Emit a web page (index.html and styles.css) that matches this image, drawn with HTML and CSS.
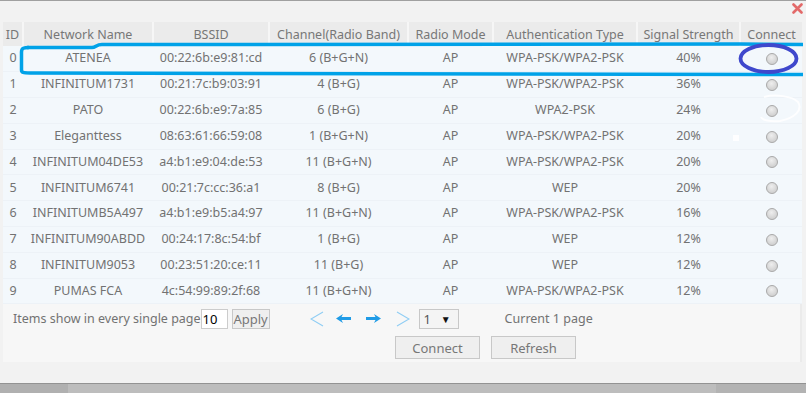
FILE: index.html
```html
<!DOCTYPE html>
<html>
<head>
<meta charset="utf-8">
<link rel="stylesheet" href="styles.css">
</head>
<body>
<div class="window">
  <div class="topbar">
    <svg class="close" width="11" height="11" viewBox="0 0 11 11"><path d="M1.5 1.5 L9.5 9.5 M9.5 1.5 L1.5 9.5" stroke="#e36a6a" stroke-width="2.6" stroke-linecap="round"/></svg>
  </div>
  <div class="panel">
    <table class="grid">
      <colgroup>
        <col style="width:20px"><col style="width:130px"><col style="width:116px"><col style="width:139px"><col style="width:85px"><col style="width:144px"><col style="width:103px"><col style="width:62px">
      </colgroup>
      <thead>
        <tr><th>ID</th><th>Network Name</th><th>BSSID</th><th>Channel(Radio Band)</th><th>Radio Mode</th><th>Authentication Type</th><th>Signal Strength</th><th>Connect</th></tr>
      </thead>
      <tbody>
        <tr><td>0</td><td>ATENEA</td><td>00:22:6b:e9:81:cd</td><td>6 (B+G+N)</td><td>AP</td><td>WPA-PSK/WPA2-PSK</td><td>40%</td><td><span class="radio"></span></td></tr>
        <tr><td>1</td><td>INFINITUM1731</td><td>00:21:7c:b9:03:91</td><td>4 (B+G)</td><td>AP</td><td>WPA-PSK/WPA2-PSK</td><td>36%</td><td><span class="radio"></span></td></tr>
        <tr><td>2</td><td>PATO</td><td>00:22:6b:e9:7a:85</td><td>6 (B+G)</td><td>AP</td><td>WPA2-PSK</td><td>24%</td><td><span class="radio"></span></td></tr>
        <tr><td>3</td><td>Eleganttess</td><td>08:63:61:66:59:08</td><td>1 (B+G+N)</td><td>AP</td><td>WPA-PSK/WPA2-PSK</td><td>20%</td><td><span class="radio"></span></td></tr>
        <tr><td>4</td><td>INFINITUM04DE53</td><td>a4:b1:e9:04:de:53</td><td>11 (B+G+N)</td><td>AP</td><td>WPA-PSK/WPA2-PSK</td><td>20%</td><td><span class="radio"></span></td></tr>
        <tr><td>5</td><td>INFINITUM6741</td><td>00:21:7c:cc:36:a1</td><td>8 (B+G)</td><td>AP</td><td>WEP</td><td>20%</td><td><span class="radio"></span></td></tr>
        <tr><td>6</td><td>INFINITUMB5A497</td><td>a4:b1:e9:b5:a4:97</td><td>11 (B+G+N)</td><td>AP</td><td>WPA-PSK/WPA2-PSK</td><td>16%</td><td><span class="radio"></span></td></tr>
        <tr><td>7</td><td>INFINITUM90ABDD</td><td>00:24:17:8c:54:bf</td><td>1 (B+G)</td><td>AP</td><td>WEP</td><td>12%</td><td><span class="radio"></span></td></tr>
        <tr><td>8</td><td>INFINITUM9053</td><td>00:23:51:20:ce:11</td><td>11 (B+G)</td><td>AP</td><td>WEP</td><td>12%</td><td><span class="radio"></span></td></tr>
        <tr><td>9</td><td>PUMAS FCA</td><td>4c:54:99:89:2f:68</td><td>11 (B+G+N)</td><td>AP</td><td>WPA-PSK/WPA2-PSK</td><td>12%</td><td><span class="radio"></span></td></tr>
      </tbody>
    </table>
    <div class="pager">
      <span class="label">Items show in every single page</span>
      <span class="field">10</span>
      <span class="btn apply">Apply</span>
      <svg class="chev first" width="14" height="16" viewBox="0 0 14 16"><polyline points="13,1 1,8 13,15" fill="none" stroke="#8fcdf4" stroke-width="1.1"/></svg>
      <svg class="arr prev" width="15" height="9" viewBox="0 0 15 9"><path d="M0 4.5 L7 0 L5.5 3 L15 3 L15 6 L5.5 6 L7 9 Z" fill="#1f9be6"/></svg>
      <svg class="arr next" width="16" height="9" viewBox="0 0 16 9"><path d="M16 4.5 L9 0 L10.5 3 L1 3 L1 6 L10.5 6 L9 9 Z" fill="#1f9be6"/></svg>
      <svg class="chev last" width="14" height="16" viewBox="0 0 14 16"><polyline points="1,1 13,8 1,15" fill="none" stroke="#8fcdf4" stroke-width="1.1"/></svg>
      <span class="select"><span>1</span><span class="caret">▼</span></span>
      <span class="current">Current 1 page</span>
    </div>
    <div class="actions">
      <span class="btn big">Connect</span>
      <span class="btn big">Refresh</span>
    </div>
  </div>
  <div class="filler"></div>
  <div class="scrollbar"><div class="sb-a"></div><div class="sb-b"></div><div class="sb-c"></div></div>
  <svg class="marks" width="806" height="393" viewBox="0 0 806 393">
    <path d="M29 47.5 C24 47.5 21.5 48 21.5 52 L21.5 70 C21.5 72.5 23 73 30 73 L803 74.5" fill="none" stroke="#00a2e8" stroke-width="3.5" stroke-linejoin="round"/>
    <path d="M27 47.5 L92 47.5 C96 47.5 96 44.5 102 44.5 L740 44 L803 44.5" fill="none" stroke="#00a2e8" stroke-width="3.5"/>
    <ellipse cx="768.5" cy="58.5" rx="28" ry="13.5" fill="none" stroke="#3f48cc" stroke-width="3.8"/>
    <path d="M764 97 C775 94 792 96 798 102 C803 110 795 118 780 121 C770 122 762 120 761 117" fill="none" stroke="#ffffff" stroke-width="2" opacity="0.85"/>
    <rect x="733" y="135" width="6" height="6" fill="#ffffff" opacity="0.85"/>
  </svg>
</div>
</body>
</html>
```

FILE: styles.css
```css
* { box-sizing: border-box; }
html, body { margin: 0; padding: 0; }
body {
  font-family: "Noto Sans", "Open Sans", sans-serif;
  font-size: 12.5px;
  color: #727272;
  background: #f2f2f2;
}
.window {
  position: relative;
  width: 806px;
  height: 393px;
  display: flex;
  flex-direction: column;
  background: #f2f2f2;
  overflow: hidden;
}
.topbar {
  height: 22px;
  border-top: 1px solid #a0a0a0;
  display: flex;
  justify-content: flex-end;
  align-items: flex-start;
  padding: 2px 3px 0 0;
}
.close { display: block; }
.panel {
  margin: 0 4px 0 3px;
  height: 340px;
  background: #f7f7f7;
  border-right: 2px solid #ebebeb;
  display: flex;
  flex-direction: column;
}
.grid {
  border-collapse: collapse;
  table-layout: fixed;
  width: 799px;
}
.grid th {
  height: 24px;
  padding: 0;
  background: #ebebeb;
  font-weight: normal;
  color: #777;
  border-left: 2px solid #f6f6f6;
  text-align: center;
  white-space: nowrap;
}
.grid th:first-child { border-left: none; }
.grid td {
  height: 25.8px;
  padding: 0;
  background: #f3f8fc;
  border-bottom: 1px solid #edf2f7;
  text-align: center;
  white-space: nowrap;
  line-height: 1;
}
.radio {
  display: inline-block;
  width: 12px;
  height: 12px;
  border-radius: 50%;
  border: 1px solid #aaaaaa;
  background: radial-gradient(circle at 45% 35%, #eeeeee 0%, #d6d6d6 60%, #c8c8c8 100%);
  vertical-align: middle;
  margin-left: 2px;
}
.pager {
  height: 29px;
  display: flex;
  align-items: center;
  padding-left: 10px;
}
.label { margin-right: 0; }
.field {
  width: 27px;
  height: 20px;
  background: #fff;
  border: 1px solid #cccccc;
  color: #000;
  font-size: 13px;
  line-height: 18px;
  padding-left: 1px;
}
.btn {
  display: inline-flex;
  align-items: center;
  justify-content: center;
  border: 1px solid #c8c8c8;
  background: #efefef;
  color: #777;
}
.apply {
  width: 38px;
  height: 20px;
  margin-left: 4px;
  font-size: 13px;
}
.chev { margin-left: 40px; display: block; }
.prev { margin-left: 12px; display: block; }
.next { margin-left: 14px; display: block; }
.last { margin-left: 15px; display: block; }
.select {
  margin-left: 9px;
  width: 40px;
  height: 20px;
  border: 1px solid #c8c8c8;
  background: #f4f4f4;
  display: inline-flex;
  align-items: center;
  justify-content: space-between;
  padding: 0 7px 0 4px;
  color: #555;
  font-size: 13px;
}
.caret { font-size: 10px; color: #111; }
.current { margin-left: 46px; }
.actions {
  display: flex;
  gap: 11px;
  padding-left: 392px;
  margin-top: 3px;
}
.big {
  width: 85px;
  height: 23px;
  font-size: 13px;
}
.filler { flex: 1; }
.scrollbar {
  height: 10px;
  border-top: 1px solid #939393;
  display: flex;
}
.sb-a { width: 68px; background: #b0b0b0; }
.sb-b { flex: 1; background: #bdbdbd; }
.sb-c { width: 90px; background: #b3b3b3; }
.marks {
  position: absolute;
  top: 0;
  left: 0;
  pointer-events: none;
}
```
